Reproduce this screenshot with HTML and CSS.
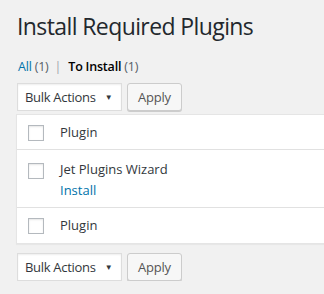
FILE: index.html
```html
<!DOCTYPE html>
<html>
<head>
<meta charset="utf-8">
<link rel="stylesheet" href="styles.css">
</head>
<body>
<div class="wrap">
  <h1 class="title">Install Required Plugins</h1>
  <ul class="views">
    <li><a class="link" href="#">All <span class="count">(1)</span></a><span class="sep">|</span></li>
    <li><a class="link current" href="#">To Install <span class="count">(1)</span></a></li>
  </ul>
  <div class="tablenav top">
    <div class="select"><span class="label">Bulk Actions</span><span class="caret">▼</span></div>
    <div class="button">Apply</div>
  </div>
  <div class="table">
    <div class="row head">
      <div class="check"><span class="cb"></span></div>
      <div class="cell">Plugin</div>
    </div>
    <div class="row body">
      <div class="check"><span class="cb"></span></div>
      <div class="cell">
        <div class="name">Jet Plugins Wizard</div>
        <a class="action" href="#">Install</a>
      </div>
    </div>
    <div class="row foot">
      <div class="check"><span class="cb"></span></div>
      <div class="cell">Plugin</div>
    </div>
  </div>
  <div class="tablenav bottom">
    <div class="select"><span class="label">Bulk Actions</span><span class="caret">▼</span></div>
    <div class="button">Apply</div>
  </div>
</div>
</body>
</html>
```
FILE: styles.css
```css
html, body {
  margin: 0;
  padding: 0;
  overflow: hidden;
}
body {
  background: #f1f1f1;
  font-family: "Open Sans", "Noto Sans", sans-serif;
  font-size: 13px;
  color: #32373c;
}
.wrap {
  padding: 0 0 0 16px;
}
.title {
  margin: 0;
  padding: 12px 0 0 1px;
  font-size: 23px;
  font-weight: 400;
  line-height: 29px;
  letter-spacing: -0.6px;
  color: #23282d;
  white-space: nowrap;
}
.views {
  list-style: none;
  margin: 17px 0 0 2px;
  padding: 0;
  display: flex;
  font-size: 12.5px;
  line-height: 18px;
  letter-spacing: -0.2px;
  color: #555d66;
}
.views li { display: flex; white-space: pre; }
.link { text-decoration: none; color: #0073aa; }
.link.current { color: #000; font-weight: 600; }
.count { color: #555d66; font-weight: 400; }
.sep { color: #a0a5aa; margin: 0 7px 0 6px; }
.tablenav {
  display: flex;
  gap: 5px;
  height: 28px;
  margin: 7px 0 0 1px;
}
.tablenav.bottom { margin-top: 9px; }
.select {
  box-sizing: border-box;
  width: 105px;
  height: 28px;
  border: 1px solid #ddd;
  background: #fff;
  box-shadow: inset 0 1px 2px rgba(0,0,0,.07);
  display: flex;
  align-items: center;
  padding: 0 0 1px 7px;
  font-size: 13px;
  letter-spacing: -0.3px;
  color: #32373c;
  white-space: nowrap;
}
.caret { font-size: 8px; color: #32373c; margin-left: 9px; }
.button {
  box-sizing: border-box;
  height: 28px;
  padding: 0 10px 1px;
  border: 1px solid #ccc;
  border-radius: 3px;
  background: #f7f7f7;
  box-shadow: 0 1px 0 #ccc;
  color: #555;
  display: flex;
  align-items: center;
  font-size: 13px;
  letter-spacing: -0.2px;
}
.table {
  margin-top: 3px;
  margin-right: -10px;
  background: #fff;
  border: 1px solid #e5e5e5;
  box-shadow: 0 1px 1px rgba(0,0,0,.04);
}
.row {
  display: flex;
  align-items: flex-start;
}
.row.head { height: 34px; border-bottom: 1px solid #e1e1e1; }
.row.body { height: 57px; }
.row.foot { height: 35px; border-top: 1px solid #e1e1e1; }
.check {
  width: 43px;
  padding-left: 11px;
  box-sizing: border-box;
  flex: none;
}
.head .check { padding-top: 10px; }
.body .check { padding-top: 13px; }
.foot .check { padding-top: 10px; }
.cb {
  display: block;
  width: 16px;
  height: 16px;
  box-sizing: border-box;
  border: 1px solid #b4b9be;
  background: #fff;
  box-shadow: inset 0 1px 2px rgba(0,0,0,.1);
}
.cell {
  font-size: 13px;
  line-height: 19px;
  color: #32373c;
}
.head .cell, .foot .cell { padding-top: 8px; }
.body .cell { padding-top: 10px; }
.name { line-height: 19px; }
.action {
  display: block;
  margin-top: 2px;
  font-size: 13px;
  line-height: 18px;
  color: #0073aa;
  text-decoration: none;
}
```
